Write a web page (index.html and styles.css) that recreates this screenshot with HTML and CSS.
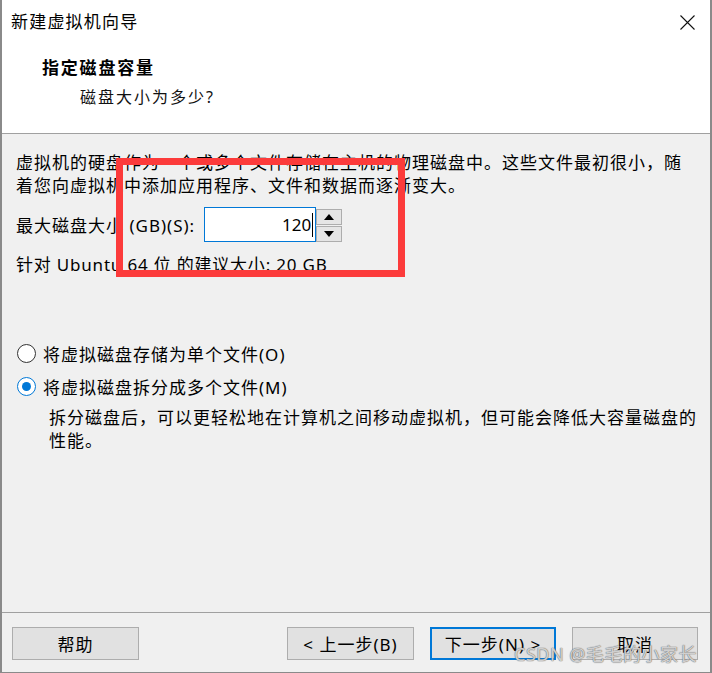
FILE: index.html
```html
<!DOCTYPE html>
<html lang="zh-CN">
<head>
<meta charset="utf-8">
<title>新建虚拟机向导</title>
<link rel="stylesheet" href="styles.css">
</head>
<body>
<div class="window">
  <header class="header">
    <div class="titlebar">
      <span class="title">新建虚拟机向导</span>
      <svg class="close" width="15" height="15" viewBox="0 0 15 15"><path d="M0.5 0.5 L14.5 14.5 M14.5 0.5 L0.5 14.5" stroke="#111" stroke-width="1.1" fill="none"/></svg>
    </div>
    <div class="heading">指定磁盘容量</div>
    <div class="subheading">磁盘大小为多少?</div>
  </header>
  <main class="content">
    <p class="intro">虚拟机的硬盘作为一个或多个文件存储在主机的物理磁盘中。这些文件最初很小，随<br>着您向虚拟机中添加应用程序、文件和数据而逐渐变大。</p>
    <div class="size-row">
      <span class="size-label">最大磁盘大小 (GB)(S):</span>
      <div class="spin">
        <div class="spin-input">120<span class="caret"></span></div>
        <div class="spin-buttons">
          <span class="spin-btn"><svg width="10" height="6" viewBox="0 0 10 6"><path d="M5 0 L10 6 L0 6 Z" fill="#000"/></svg></span>
          <span class="spin-btn"><svg width="10" height="6" viewBox="0 0 10 6"><path d="M0 0 L10 0 L5 6 Z" fill="#000"/></svg></span>
        </div>
      </div>
    </div>
    <p class="hint">针对 Ubuntu 64 位 的建议大小: 20 GB</p>
    <div class="options">
      <div class="radio-row"><span class="radio"></span><span>将虚拟磁盘存储为单个文件(O)</span></div>
      <div class="radio-row"><span class="radio checked"></span><span>将虚拟磁盘拆分成多个文件(M)</span></div>
      <p class="desc">拆分磁盘后，可以更轻松地在计算机之间移动虚拟机，但可能会降低大容量磁盘的<br>性能。</p>
    </div>
  </main>
  <footer class="footer">
    <button class="btn">帮助</button>
    <div class="nav">
      <button class="btn">&lt; 上一步(B)</button>
      <button class="btn default">下一步(N) &gt;</button>
      <button class="btn">取消</button>
    </div>
  </footer>
  <div class="highlight"></div>
  <div class="watermark">CSDN @毛毛的小家长</div>
</div>
</body>
</html>
```
FILE: styles.css
```css
* { box-sizing: border-box; }
html, body { margin: 0; padding: 0; }
body {
  width: 712px;
  height: 673px;
  overflow: hidden;
  background: #f0f0f0;
  font-family: "Noto Sans", "Noto Sans CJK SC", sans-serif;
  font-size: 17px;
  letter-spacing: 1px;
  color: #000;
}
.window {
  position: relative;
  width: 712px;
  height: 673px;
  display: flex;
  flex-direction: column;
  background: #f0f0f0;
  border-left: 2px solid #8a8a8a;
  border-right: 2px solid #8a8a8a;
  border-bottom: 1px solid #8a8a8a;
}
.header {
  height: 134px;
  background: #fff;
  border-bottom: 1px solid #a0a0a0;
  flex: none;
}
.titlebar {
  height: 44px;
  display: flex;
  align-items: center;
  justify-content: space-between;
  padding: 0 15px 0 9px;
}
.title {
  font-size: 17px;
  letter-spacing: 1.2px;
  line-height: 44px;
}
.heading {
  margin-top: 13px;
  padding-left: 40px;
  line-height: 22px;
  font-weight: bold;
  letter-spacing: 1.8px;
}
.subheading {
  margin-top: 7px;
  padding-left: 78px;
  line-height: 22px;
  font-size: 16px;
  letter-spacing: 2px;
  color: #111;
}
.content {
  flex: 1;
  padding: 17px 14px 0 14px;
}
.intro, .hint, .desc { margin: 0; line-height: 23px; white-space: nowrap; }
.size-row {
  margin-top: 10px;
  display: flex;
  align-items: center;
  height: 35px;
}
.size-label { margin-right: 9px; }
.spin { display: flex; height: 35px; }
.spin-input {
  width: 112px;
  height: 35px;
  background: #fff;
  border: 1px solid #0078d7;
  display: flex;
  align-items: center;
  justify-content: flex-end;
  padding-right: 2px;
  font-size: 17px;
  letter-spacing: 0;
}
.caret {
  display: inline-block;
  width: 1px;
  height: 24px;
  background: #000;
  margin-left: 1px;
}
.spin-buttons {
  display: flex;
  flex-direction: column;
  justify-content: flex-end;
  width: 26px;
  gap: 1px;
}
.spin-btn {
  height: 16px;
  background: #e5e5e5;
  border: 1px solid #adadad;
  display: flex;
  align-items: center;
  justify-content: center;
}
.hint { margin-top: 11px; letter-spacing: 0.8px; }
.options { margin-top: 61px; }
.radio-row {
  height: 33px;
  display: flex;
  align-items: center;
}
.radio {
  width: 19px;
  height: 19px;
  border-radius: 50%;
  border: 1px solid #333;
  background: #fff;
  margin-left: 1px;
  margin-right: 7px;
  display: flex;
  align-items: center;
  justify-content: center;
}
.radio.checked { border-color: #0078d7; }
.radio.checked::after {
  content: "";
  width: 9px;
  height: 9px;
  border-radius: 50%;
  background: #0078d7;
}
.desc { margin-top: 3px; padding-left: 33px; }
.footer {
  flex: none;
  height: 60px;
  border-top: 1px solid #a0a0a0;
  padding: 14px 12px 12px 10px;
  display: flex;
  justify-content: space-between;
}
.nav { display: flex; gap: 16px; }
.btn {
  width: 126px;
  height: 33px;
  background: #e1e1e1;
  border: 1px solid #adadad;
  font-family: inherit;
  font-size: 17px;
  letter-spacing: 1px;
  color: #000;
  padding: 0;
}
.btn:first-child { width: 127px; }
.btn.default { border: 2px solid #0078d7; }
.highlight {
  position: absolute;
  left: 114px;
  top: 158px;
  width: 289px;
  height: 119px;
  border: 7px solid #fc3b3b;
}
.watermark {
  position: absolute;
  right: 13px;
  bottom: 6px;
  font-size: 18px;
  letter-spacing: 0.5px;
  color: rgba(255, 255, 255, 0.7);
  text-shadow: 0 0 1px #666, 0 0 1px #666;
}
```
